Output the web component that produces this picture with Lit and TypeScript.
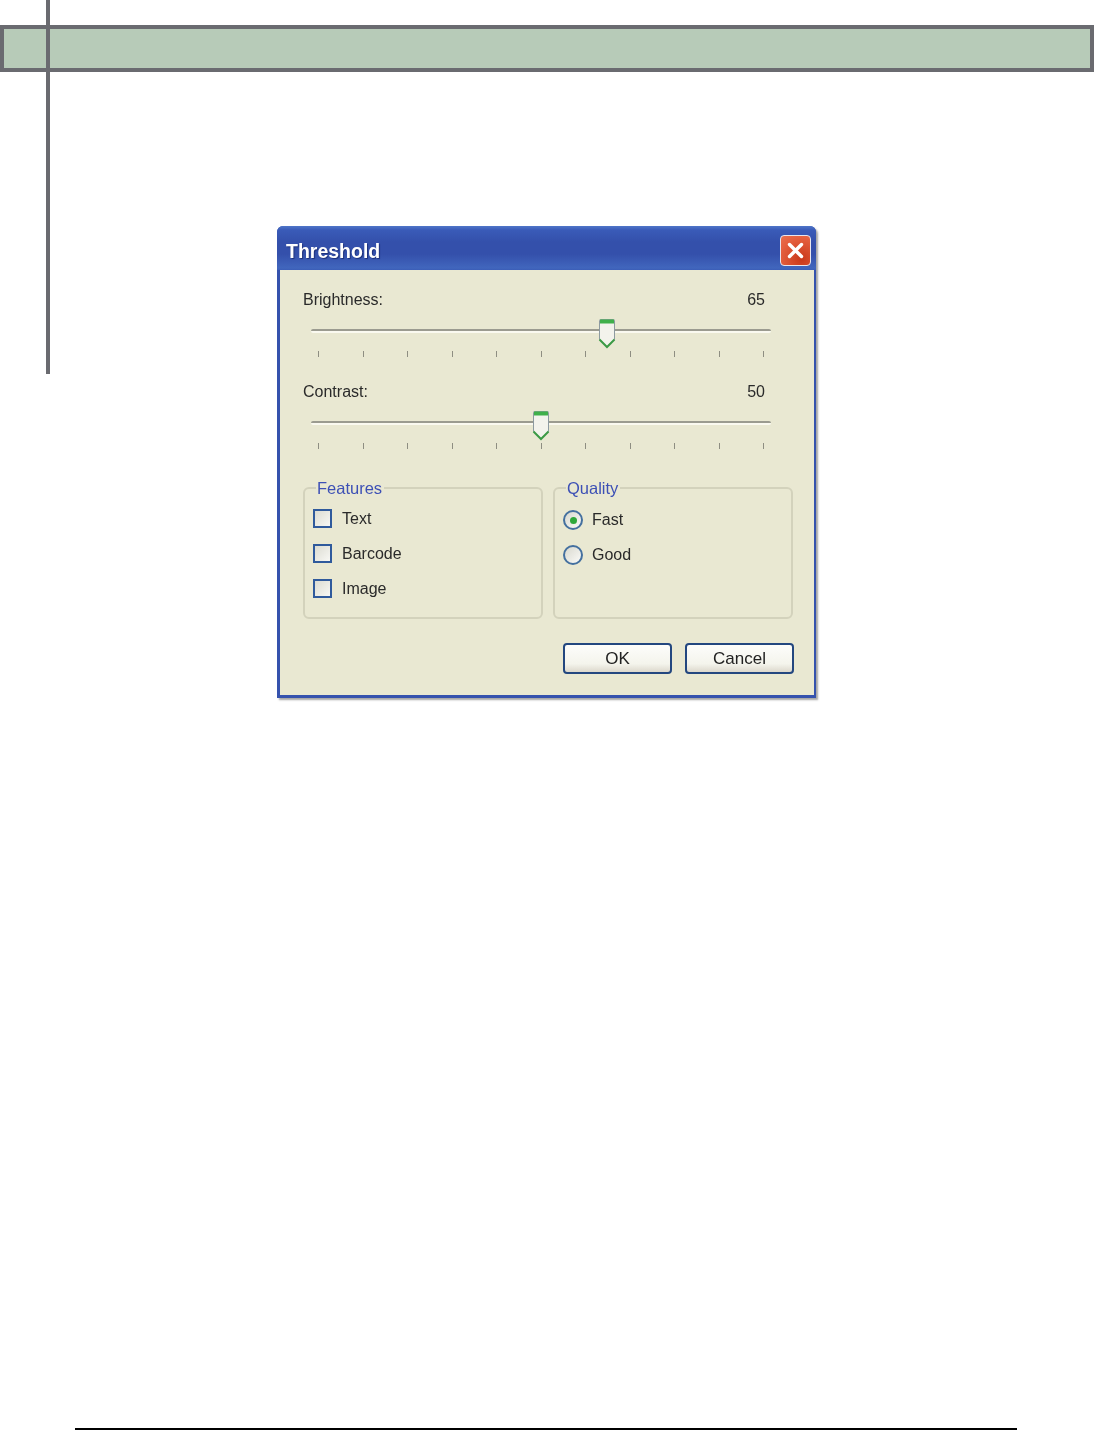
import { LitElement, html, css, svg } from "lit";
import { customElement } from "lit/decorators.js";

const TICKS = Array.from({ length: 11 }, (_, i) => i);

@customElement("app-root")
export class AppRoot extends LitElement {
  static styles = css`
    :host { display: block; position: relative; width: 1095px; height: 1430px; overflow: hidden; background: #fff; font-family: "Liberation Sans", Arial, sans-serif; }
    .page { display: flex; flex-direction: column; height: 1430px; box-sizing: border-box; padding-top: 25px; }
    .band { height: 47px; width: 1094px; box-sizing: border-box; border: 4px solid #6a6b70; background: #b7cbb8; flex: none; }
    .vline { position: absolute; left: 46px; top: 0; width: 4px; height: 374px; background: #6a6b70; }
    .dialog { flex: none; margin: 154px 0 0 277px; width: 539px; height: 472px; box-sizing: border-box; border-radius: 6px 6px 0 0; background: #3552ad; box-shadow: 2px 2px 2px rgba(90,90,90,.55); display: flex; flex-direction: column; filter: blur(.35px); }
    .title { flex: none; height: 44px; box-sizing: border-box; padding: 8px 5px 0 9px; display: flex; justify-content: space-between; align-items: flex-start; border-radius: 6px 6px 0 0; background: linear-gradient(#4f76c8 0, #3a5bb8 4px, #3450ab 16px, #3450ab 28px, #4166bd 42px, #3b5db7 44px); color: #fff; font-size: 19.5px; font-weight: 700; line-height: 34px; text-shadow: 1px 1px 1px #1c2f78; }
    .close { width: 31px; height: 31px; margin-top: 1px; box-sizing: border-box; border: 1px solid #e8e6ee; border-radius: 4px; background: radial-gradient(circle at 70% 80%, #c9381a, #e5603f 70%, #e87050); display: flex; align-items: center; justify-content: center; }
    .body { flex: 1; margin: 0 2px 3px 3px; background: #e9e8d2; box-sizing: border-box; padding: 18px 20px 0 23px; color: #222; font-size: 16px; display: flex; flex-direction: column; }
    .slider { height: 69px; margin-bottom: 23px; flex: none; }
    .slider:nth-of-type(2) { margin-bottom: 38px; }
    .labels { height: 24px; line-height: 24px; display: flex; justify-content: space-between; padding-right: 29px; color: #2a2a2a; }
    .track-wrap { position: relative; margin: 17px 0 0 8px; width: 460px; height: 4px; box-sizing: border-box; border-top: 2px solid #9b9b90; border-bottom: 2px solid #faf9f0; border-radius: 2px; }
    .thumb { position: absolute; top: -13px; display: block; }
    .ticks { display: flex; justify-content: space-between; margin: 18px 0 0 15px; width: 446px; height: 6px; }
    .tick { width: 1px; height: 6px; background: #8e8e82; }
    .groups { display: flex; gap: 10px; flex: none; }
    .group { position: relative; width: 240px; height: 132px; box-sizing: border-box; border: 2px solid #d3d2bc; border-radius: 6px; padding: 20px 0 0 8px; display: flex; flex-direction: column; }
    .legend { position: absolute; left: 11px; top: -11px; padding: 0 2px 0 1px; background: #e9e8d2; color: #3d50b5; font-size: 16.5px; line-height: 20px; }
    .row { display: flex; align-items: center; height: 19px; margin-bottom: 16px; color: #2a2a2a; }
    .check { flex: none; width: 19px; height: 19px; box-sizing: border-box; border: 2px solid #2f5a9c; margin-right: 10px; background: linear-gradient(135deg, #dcdcd2, #f8f8f4); }
    .radio-row { height: 20px; margin-bottom: 15px; margin-top: 1px; margin-left: 0; }
    .radio-row + .radio-row { margin-top: 0; }
    .radio { flex: none; width: 20px; height: 20px; box-sizing: border-box; border: 2px solid #44709f; border-radius: 50%; margin-right: 9px; background: linear-gradient(135deg, #d8d8ce, #fbfbf8); display: flex; align-items: center; justify-content: center; }
    .dot { width: 7px; height: 7px; border-radius: 50%; background: #2fa83a; }
    .buttons { display: flex; justify-content: flex-end; gap: 13px; margin-top: 24px; flex: none; }
    .btn { width: 109px; height: 31px; box-sizing: border-box; border: 2px solid #23477f; border-radius: 4px; background: linear-gradient(#fdfdfb, #f4f4ec 70%, #dcd8cc); display: flex; align-items: center; justify-content: center; font-size: 17px; color: #222; padding-top: 1px; }
    .foot { flex: none; margin: auto 0 0 75px; width: 942px; height: 2px; background: #000; }
  `;

  private slider(label: string, value: number) {
    const left = 7 + 4.45 * value - 9;
    return html`<div class="slider">
      <div class="labels"><span>${label}</span><span>${value}</span></div>
      <div class="track-wrap">
        <svg class="thumb" style="left:${left}px" width="18" height="31" viewBox="0 0 18 31">
          ${svg`<path d="M2.5 1.5h13a1 1 0 0 1 1 1v19l-7.5 7.5-7.5-7.5v-19a1 1 0 0 1 1-1z" fill="#f3f3ec" stroke="#8d9aa0" stroke-width="1"/>
          <path d="M2 1.5h14v4H2z" fill="#3fb04a"/>
          <path d="M1.5 21.5 9 29l7.5-7.5" fill="none" stroke="#3b9a45" stroke-width="2"/>`}
        </svg>
      </div>
      <div class="ticks">${TICKS.map(() => html`<span class="tick"></span>`)}</div>
    </div>`;
  }

  render() {
    return html`<div class="page">
      <div class="band"></div>
      <div class="dialog">
        <div class="title">
          <span>Threshold</span>
          <span class="close">
            <svg width="21" height="21" viewBox="0 0 21 21"><path d="M4.5 4.5 16.5 16.5M16.5 4.5 4.5 16.5" stroke="#fff" stroke-width="3.4" stroke-linecap="round"/></svg>
          </span>
        </div>
        <div class="body">
          ${this.slider("Brightness:", 65)}
          ${this.slider("Contrast:", 50)}
          <div class="groups">
            <div class="group">
              <span class="legend">Features</span>
              ${["Text", "Barcode", "Image"].map((t) => html`<div class="row"><span class="check"></span>${t}</div>`)}
            </div>
            <div class="group">
              <span class="legend">Quality</span>
              <div class="row radio-row"><span class="radio"><span class="dot"></span></span>Fast</div>
              <div class="row radio-row"><span class="radio"></span>Good</div>
            </div>
          </div>
          <div class="buttons">
            <div class="btn">OK</div>
            <div class="btn">Cancel</div>
          </div>
        </div>
      </div>
      <div class="foot"></div>
    </div>
    <div class="vline"></div>`;
  }
}
